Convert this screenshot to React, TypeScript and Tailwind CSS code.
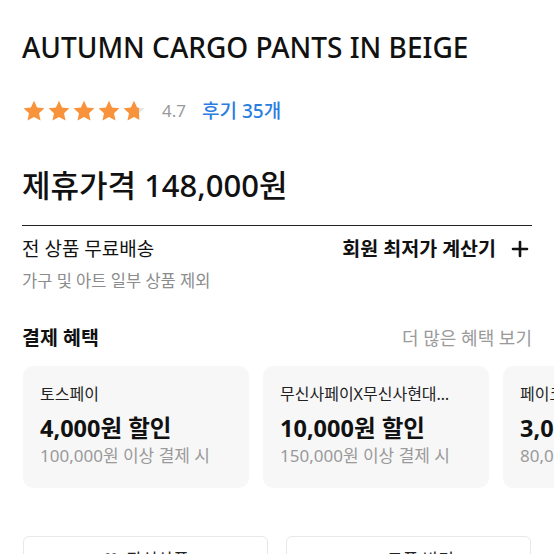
import React from 'react';
import { Plus, Heart, Ticket } from 'lucide-react';

const Star = ({ fill = 1 }: { fill?: number }) => {
  const id = `half-${fill}`;
  return (
    <svg width="24" height="24" viewBox="0 0 24 24">
      <defs>
        <linearGradient id={id} x1="0" x2="1" y1="0" y2="0">
          <stop offset={fill} stopColor="#f8923b" />
          <stop offset={fill} stopColor="#e5e5e5" />
        </linearGradient>
      </defs>
      <path
        d="M12 1.8l3.1 6.7 7.3.8-5.4 5 1.5 7.2L12 17.9l-6.5 3.6 1.5-7.2-5.4-5 7.3-.8z"
        fill={`url(#${id})`}
      />
    </svg>
  );
};

const benefits = [
  { name: '토스페이', amount: '4,000원 할인', cond: '100,000원 이상 결제 시' },
  { name: '무신사페이X무신사현대…', amount: '10,000원 할인', cond: '150,000원 이상 결제 시' },
  { name: '페이코', amount: '3,000원 할인', cond: '80,000원 이상 결제 시' },
];

const App = () => {
  return (
    <div
      className="w-[554px] h-[554px] overflow-hidden bg-white text-[#111]"
      style={{ fontFamily: '"Noto Sans", "Noto Sans CJK KR", sans-serif' }}
    >
      <div className="pl-[22px] pr-[22px]">
        {/* title */}
        <h1 className="pt-[28px] text-[28px] leading-[38px] font-medium whitespace-nowrap">
          AUTUMN CARGO PANTS IN BEIGE
        </h1>

        {/* rating */}
        <div className="mt-[33px] h-[24px] flex items-center">
          <div className="flex items-center gap-[1px]">
            <Star />
            <Star />
            <Star />
            <Star />
            <Star fill={0.72} />
          </div>
          <span className="ml-[16px] text-[17px] text-[#9a9a9a]">4.7</span>
          <span className="ml-[16px] text-[19px] font-medium text-[#2a7de1]">후기 35개</span>
        </div>

        {/* price */}
        <div className="mt-[44px] text-[31px] leading-[36px] font-medium whitespace-nowrap">
          제휴가격 148,000원
        </div>

        <div className="mt-[22px] border-t-[1.5px] border-[#222]" />

        {/* shipping */}
        <div className="mt-[11px] flex items-start justify-between">
          <div>
            <div className="text-[19px] leading-[24px]">전 상품 무료배송</div>
            <div className="mt-[10px] text-[16.5px] leading-[20px] text-[#8c8c8c]">가구 및 아트 일부 상품 제외</div>
          </div>
          <div className="flex items-center h-[24px]">
            <span className="text-[19.5px] font-bold">회원 최저가 계산기</span>
            <Plus className="ml-[12px] w-[24px] h-[24px] text-[#111]" strokeWidth={2.6} />
          </div>
        </div>

        {/* benefits header */}
        <div className="mt-[34px] flex items-center justify-between h-[26px]">
          <span className="text-[19.5px] font-bold">결제 혜택</span>
          <span className="text-[18px] text-[#9a9a9a]">더 많은 혜택 보기</span>
        </div>
      </div>

      {/* benefit cards */}
      <div className="mt-[15px] pl-[23px] flex gap-[14px] overflow-hidden">
        {benefits.map((b) => (
          <div key={b.name} className="w-[226px] h-[122px] shrink-0 rounded-[10px] bg-[#f7f7f7] pl-[17px] pt-[17px] whitespace-nowrap overflow-hidden">
            <div className="text-[16px] leading-[22px] text-[#222]">{b.name}</div>
            <div className="mt-[8px] text-[23.5px] leading-[30px] font-bold">{b.amount}</div>
            <div className="mt-[2px] text-[17px] leading-[22px] text-[#9a9a9a]">{b.cond}</div>
          </div>
        ))}
      </div>

      {/* buttons */}
      <div className="mt-[48px] px-[23px] grid grid-cols-2 gap-[18px]">
        <button className="h-[48px] rounded-[6px] border border-[#e8e8e8] flex items-center justify-center gap-[6px] text-[17px] text-[#222]">
          <Heart className="w-[18px] h-[18px]" strokeWidth={1.6} />
          관심상품
        </button>
        <button className="h-[48px] rounded-[6px] border border-[#e8e8e8] flex items-center justify-center gap-[6px] text-[17px] text-[#222]">
          <Ticket className="w-[18px] h-[18px]" strokeWidth={1.6} />
          쿠폰 받기
        </button>
      </div>
    </div>
  );
};

export default App;
